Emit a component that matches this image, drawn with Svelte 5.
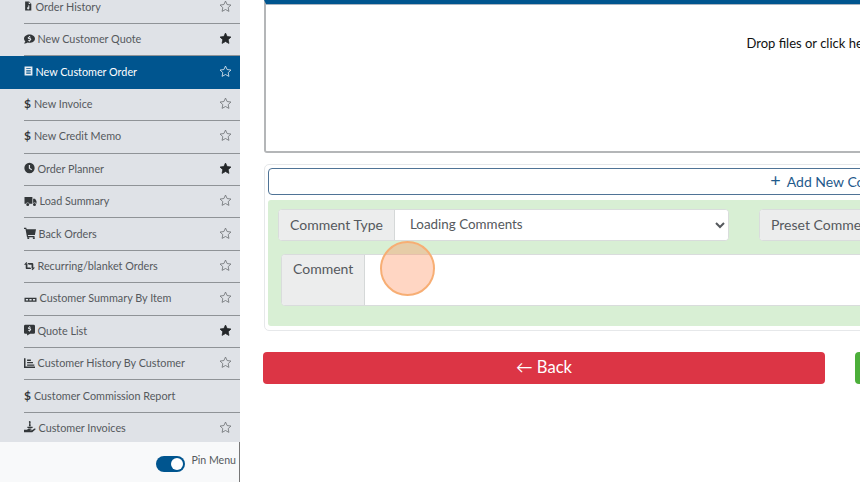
<script>
  const icons = {
    file: 'M2 0h7l4 4v12H2z M8.500 1v3.500H12z M7 7h2.500v5a2 2 0 1 1-1.500-1.900V9H7z',
    quote: 'M8 1.500c4.200 0 8 2.600 8 6s-3.800 6-8 6c-1 0-2-.2-2.800-.5C4 14 2.200 14.500 0 14.500c1-1 1.700-2.200 1.900-3.200C.7 10.300 0 9 0 7.500c0-3.400 3.800-6 8-6z M7.200 3.500v1.100C6 4.800 5.400 5.500 5.400 6.400c0 2 3.400 1.400 3.400 2.500 0 .7-1.700.6-3 .1v1.300c.5.200 1 .3 1.400.3v1h1.500v-1c1.100-.2 1.900-1 1.900-2.100 0-2.100-3.400-1.600-3.400-2.600 0-.6 1.500-.5 2.700-.1V5c-.4-.2-.8-.3-1.200-.3V3.500z',
    order: 'M1 0h14v16H1z M4 3v1.500h8V3z M4 6v1.500h8V6z M4 9v1.500h8V9z M4 12v1.500h8V12z',
    clock: 'M8 .5a7.500 7.500 0 1 1 0 15 7.500 7.500 0 0 1 0-15z M7 3.500v5.300l3.800 2.300.9-1.400-2.900-1.800V3.500z',
    truck: 'M0 2.500h10.500v9H6.500a2.500 2.500 0 0 0-4.500 0H0z M11.500 5H14l2 3v3.500h-.3a2.500 2.500 0 0 0-4.200-.5z M4.300 10.500a2 2 0 1 1 0 4 2 2 0 0 1 0-4z M13.300 10.500a2 2 0 1 1 0 4 2 2 0 0 1 0-4z',
    cart: 'M0 1h3l.5 2H16l-1.500 7.500H5.200l.3 1.500H14v1.800H4L2 2.800H0z M5.300 13.300a1.400 1.400 0 1 1 0 2.700 1.400 1.400 0 0 1 0-2.700z M12.700 13.300a1.400 1.400 0 1 1 0 2.700 1.400 1.400 0 0 1 0-2.700z',
    retweet: 'M3.500 2L7 6H5v4h5.500l2 2.500H4.200A1.700 1.700 0 0 1 2.500 10.800V6H0z M12.500 14L9 10h2V6H5.500l-2-2.500h8.300a1.700 1.700 0 0 1 1.700 1.700V10H16z',
    pallet: 'M0 7.500h16v5.500H0z M1.800 9.200v2.100h3v-2.100z M6.500 9.200v2.100h3v-2.100z M11.200 9.200v2.100h3v-2.100z',
    list: 'M2 .5h12a2 2 0 0 1 2 2v9a2 2 0 0 1-2 2H9l-4.500 2.500V13.500H2a2 2 0 0 1-2-2v-9a2 2 0 0 1 2-2z M7.300 2.500v1C6.200 3.700 5.600 4.400 5.600 5.200c0 1.800 3 1.300 3 2.300 0 .6-1.500.5-2.700.1v1.200c.4.200.9.300 1.400.3v1h1.400v-1c1-.2 1.700-.9 1.700-1.900 0-1.900-3-1.400-3-2.300 0-.5 1.300-.5 2.400-.1V3.700c-.3-.1-.7-.2-1.100-.3v-.9z',
    chart: 'M0 1h2.200v12H16v2.200H0z M4.500 3H10v2H4.500z M4.500 6.500H13v2H4.500z M4.500 10H15v2H4.500z',
    hand: 'M7.500 0a1.500 1.500 0 0 1 1 2.600L9 7H6.500l.5-4.400A1.500 1.500 0 0 1 7.500 0z M4.500 7.500h7v1.800h-7z M0 11.500h4l2-1.500h3.500c.8 0 .8 1.500 0 1.500H8v.7h2.500l3.500-2.200c1-.5 2 .6 1.200 1.400L11 15H0z'
  };

  const items = [
    { label: 'Order History', icon: 'file', w: 9 },
    { label: 'New Customer Quote', icon: 'quote', w: 11, fav: true },
    { label: 'New Customer Order', icon: 'order', w: 9, active: true },
    { label: 'New Invoice', dollar: true },
    { label: 'New Credit Memo', dollar: true },
    { label: 'Order Planner', icon: 'clock', w: 11, fav: true },
    { label: 'Load Summary', icon: 'truck', w: 13 },
    { label: 'Back Orders', icon: 'cart', w: 12 },
    { label: 'Recurring/blanket Orders', icon: 'retweet', w: 11 },
    { label: 'Customer Summary By Item', icon: 'pallet', w: 13 },
    { label: 'Quote List', icon: 'list', w: 11, fav: true },
    { label: 'Customer History By Customer', icon: 'chart', w: 11 },
    { label: 'Customer Commission Report', dollar: true, nostar: true },
    { label: 'Customer Invoices', icon: 'hand', w: 12 }
  ];

  const star = 'M8 1.300l2 4.300 4.700.6-3.400 3.200.9 4.600L8 11.700 3.800 14l.9-4.600L1.300 6.200 6 5.600z';
</script>

<div class="page">
  <aside class="sidebar">
    <ul class="menu">
      {#each items as item}
        <li class="row" class:active={item.active}>
          {#if item.dollar}
            <span class="dollar">$</span>
          {:else}
            <svg class="icon" style="width: {item.w}px" viewBox="0 0 16 16"><path fill-rule="evenodd" d={icons[item.icon]} /></svg>
          {/if}
          <span class="label">{item.label}</span>
          {#if !item.nostar}
            <svg class="star" class:fav={item.fav} viewBox="0 0 16 16"><path d={star} /></svg>
          {/if}
        </li>
      {/each}
    </ul>
    <div class="pin">
      <span class="toggle"><span class="knob"></span></span>
      <span class="pin-label">Pin Menu</span>
    </div>
  </aside>

  <main class="main">
    <div class="content">
      <div class="dropzone">Drop files or click here to upload</div>

      <section class="comments">
        <button class="add"><span class="plus">+</span>Add New Comment</button>
        <div class="green">
          <div class="fields">
            <div class="group">
              <span class="addon">Comment Type</span>
              <select class="select">
                <option>Loading Comments</option>
              </select>
            </div>
            <div class="group">
              <span class="addon">Preset Comment</span>
              <select class="select"><option></option></select>
            </div>
          </div>
          <div class="group comment-group">
            <span class="addon top">Comment</span>
            <div class="textarea"></div>
          </div>
        </div>
      </section>

      <div class="actions">
        <button class="btn back">← Back</button>
        <button class="btn save">Save</button>
      </div>
    </div>
    <span class="click"></span>
  </main>
</div>

<style>
  :global(body) {
    margin: 0;
    background: #fff;
  }

  .page {
    display: flex;
    width: 860px;
    height: 482px;
    overflow: hidden;
    font-family: Lato, "Open Sans", sans-serif;
    color: #495057;
  }

  .sidebar {
    width: 240px;
    flex: none;
    display: flex;
    flex-direction: column;
    overflow: hidden;
    background: #f8f9fa;
  }

  .menu {
    list-style: none;
    margin: 0;
    padding: 0;
    height: 442px;
    background: #dfe2e7;
    overflow: hidden;
  }

  .row {
    display: flex;
    align-items: center;
    height: 32.4px;
    box-sizing: border-box;
    margin-left: 24px;
    padding: 0 8px 2px 0;
    border-bottom: 1.5px solid #8f9397;
    font-size: 10.8px;
    color: #55595d;
  }

  .row:first-child {
    margin-top: -8.3px;
  }

  .row.active {
    margin-left: 0;
    padding-left: 24px;
    background: #00558f;
    border-bottom-color: #00558f;
    color: #fff;
  }

  .icon {
    height: 12px;
    flex: none;
    margin-right: 2.5px;
    fill: #33373a;
  }

  .active .icon {
    fill: #e8edf2;
  }

  .dollar {
    font-weight: 700;
    margin-right: 3px;
    font-size: 12px;
    color: #33373a;
  }

  .label {
    flex: 1;
    white-space: nowrap;
  }

  .star {
    width: 13px;
    height: 13px;
    flex: none;
    fill: none;
    stroke: #6c7074;
    stroke-width: 1;
  }

  .star.fav {
    fill: #24272a;
    stroke: #24272a;
  }

  .active .star {
    stroke: #e8edf2;
  }

  .pin {
    flex: 1;
    display: flex;
    align-items: flex-start;
    justify-content: flex-end;
    padding: 12px 3px 0 0;
    border-right: 1px solid #777;
  }

  .toggle {
    width: 29px;
    height: 16px;
    margin: 2px 6px 0 0;
    border-radius: 8px;
    background: #00558f;
    display: flex;
    justify-content: flex-end;
    align-items: center;
    padding-right: 2px;
    box-sizing: border-box;
  }

  .knob {
    width: 12px;
    height: 12px;
    border-radius: 50%;
    background: #fff;
  }

  .pin-label {
    font-size: 10.6px;
    color: #55595d;
  }

  .main {
    flex: 1;
    position: relative;
    overflow: hidden;
  }

  .content {
    width: 1150px;
    margin-left: 24px;
  }

  .dropzone {
    height: 153px;
    box-sizing: border-box;
    border: 2px solid #b4b6b8;
    border-top: 4px solid #00558f;
    border-radius: 0 0 3px 3px;
    padding-top: 31px;
    text-align: center;
    font-size: 13px;
    color: #111;
    box-shadow: inset 0 1px 0 #aab4c0;
  }

  .comments {
    margin-top: 11px;
    height: 167px;
    box-sizing: border-box;
    padding: 3px;
    border: 1px solid #e6e8ea;
    border-radius: 5px;
  }

  .add {
    display: block;
    width: 100%;
    height: 27px;
    padding: 0 0 3px;
    border: 1px solid #4f7396;
    border-radius: 4px;
    background: #fff;
    color: #1f5a8c;
    font: 14px Lato, sans-serif;
  }

  .plus {
    font-size: 18px;
    line-height: 1;
    margin-right: 6px;
  }

  .green {
    margin-top: 5px;
    height: 126px;
    box-sizing: border-box;
    padding: 9px 10px;
    background: #d8efd4;
    border-radius: 3px;
  }

  .fields {
    display: grid;
    grid-template-columns: 451px 1fr;
    gap: 30px;
  }

  .group {
    display: flex;
    height: 32px;
    box-sizing: border-box;
    border: 1px solid #d9dcdc;
    border-radius: 4px;
    overflow: hidden;
    background: #fff;
  }

  .addon {
    flex: none;
    display: flex;
    align-items: center;
    padding: 0 11px 2px;
    background: #eceded;
    border-right: 1px solid #d5d8d8;
    font-size: 14px;
    color: #55595d;
  }

  .addon.top {
    width: 83px;
    box-sizing: border-box;
    align-items: flex-start;
    padding-top: 5px;
  }

  .select {
    flex: 1;
    min-width: 0;
    border: none;
    background: #fff;
    padding: 0 8px 2px 11px;
    font: 13.4px Lato, sans-serif;
    color: #55595d;
  }

  .comment-group {
    height: 52px;
    margin: 13px 0 0 3px;
  }

  .textarea {
    flex: 1;
  }

  .actions {
    display: grid;
    grid-template-columns: 562px 1fr;
    gap: 30px;
    margin: 21px 0 0 -1px;
  }

  .btn {
    height: 32px;
    padding: 0 0 3px;
    border: none;
    border-radius: 4px;
    color: #fff;
    font: 16.6px Lato, sans-serif;
  }

  .back {
    background: #dc3545;
  }

  .save {
    background: #4caf3a;
  }

  .click {
    position: absolute;
    left: 140px;
    top: 241px;
    width: 51px;
    height: 51px;
    border-radius: 50%;
    background: rgba(255, 140, 90, 0.36);
    border: 2px solid #f7ae74;
  }
</style>
